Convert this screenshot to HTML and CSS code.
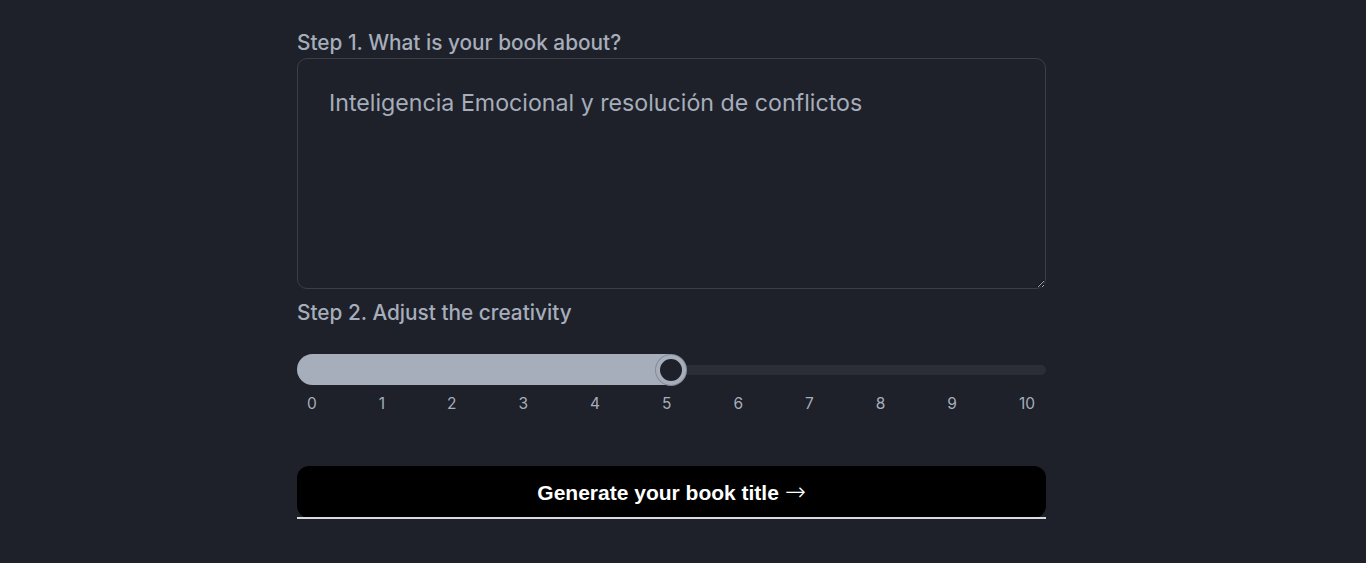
FILE: index.html
```html
<!DOCTYPE html>
<html lang="en">
<head>
<meta charset="utf-8">
<title>Book title generator</title>
<link rel="stylesheet" href="styles.css">
</head>
<body>
<main class="form">
  <label class="label label-first" for="about">Step 1. What is your book about?</label>
  <textarea id="about" class="about">Inteligencia Emocional y resolución de conflictos</textarea>
  <label class="label label-second">Step 2. Adjust the creativity</label>
  <div class="range">
    <div class="range-fill"></div>
    <div class="range-thumb"></div>
    <div class="range-track"></div>
  </div>
  <div class="ticks">
    <span>0</span><span>1</span><span>2</span><span>3</span><span>4</span><span>5</span><span>6</span><span>7</span><span>8</span><span>9</span><span>10</span>
  </div>
  <button class="generate">Generate your book title <span class="arrow">→</span></button>
  <div class="underline"></div>
</main>
</body>
</html>
```
FILE: styles.css
```css
* { box-sizing: border-box; }
html, body { margin: 0; padding: 0; }
body {
  background: #1e2129;
  font-family: Inter, "Noto Sans", sans-serif;
  color: #a6adbb;
  height: 563px;
  overflow: hidden;
}
.form {
  width: 749px;
  margin-left: 297px;
  padding-top: 29px;
  display: flex;
  flex-direction: column;
}
.label {
  font-size: 20.8px;
  font-weight: 500;
  line-height: 27px;
  color: #a6adbb;
}
.label-first { margin-bottom: 2px; }
.about {
  height: 231px;
  width: 100%;
  background: #1e2129;
  border: 1px solid #3b3f47;
  border-radius: 10px;
  padding: 28px 31px;
  font-family: Inter, "Noto Sans", sans-serif;
  font-size: 23.2px;
  line-height: 32px;
  color: #a6adbb;
  resize: vertical;
  outline: none;
}
.label-second { margin-top: 10px; }
.range {
  margin-top: 28px;
  height: 31px;
  display: flex;
  align-items: center;
}
.range-fill {
  width: 375px;
  height: 31px;
  background: #a6adbb;
  border-radius: 16px 0 0 16px;
}
.range-thumb {
  width: 30px;
  height: 30px;
  margin-left: -16px;
  border-radius: 50%;
  background: #1e2129;
  border: 4px solid #a6adbb;
  box-shadow: 0 0 0 1px #868c97;
  position: relative;
  z-index: 1;
  flex: none;
}
.range-track {
  flex: 1;
  height: 10px;
  margin-left: -2px;
  background: #2b2e37;
  border-radius: 0 5px 5px 0;
}
.ticks {
  margin-top: 9px;
  padding: 0 11px 0 10px;
  display: flex;
  justify-content: space-between;
  font-size: 15.5px;
  line-height: 20px;
  color: #a6adbb;
}
.generate {
  margin-top: 52px;
  height: 52px;
  width: 100%;
  background: #000;
  color: #fff;
  border: none;
  border-radius: 12px;
  font-family: "Liberation Sans", Arial, sans-serif;
  font-size: 21px;
  font-weight: 700;
  cursor: pointer;
}
.arrow {
  font-family: "DejaVu Sans", sans-serif;
  font-weight: 200;
  font-size: 25px;
  line-height: 1;
}
.underline {
  height: 2px;
  margin-top: -1px;
  background: #d9dbe0;
}
```
